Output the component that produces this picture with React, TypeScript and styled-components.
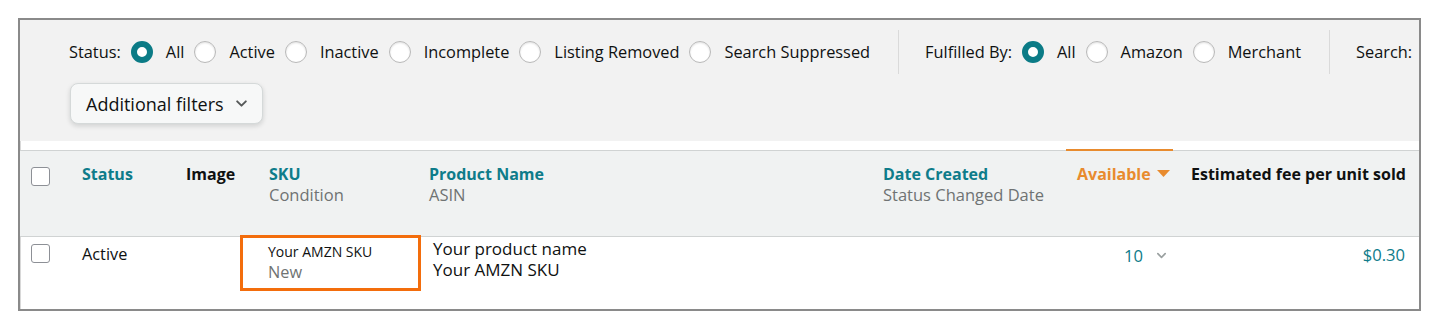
import React from "react";
import styled, { createGlobalStyle } from "styled-components";

const Global = createGlobalStyle`
  html, body { margin: 0; padding: 0; background: #fff; }
  body { font-family: "Open Sans", "Liberation Sans", sans-serif; color: #0f1111; }
  * { box-sizing: border-box; }
`;

const Page = styled.div`
  padding: 18px 19px 0 18px;
`;

const Frame = styled.div`
  border: 2px solid #8a8a8a;
  box-shadow: inset 1px 1px 0 #d8d8d8;
  width: 1403px;
  height: 293px;
  background: #fff;
  display: flex;
  flex-direction: column;
  overflow: hidden;
`;

const FilterArea = styled.div`
  background: #f2f2f2;
  padding: 10px 0 17px 49px;
  display: flex;
  flex-direction: column;
  gap: 9px;
`;

const FilterRow = styled.div`
  display: flex;
  align-items: center;
  height: 44px;
  white-space: nowrap;
  font-size: 16.35px;
  & > * { flex-shrink: 0; }
`;

const GroupLabel = styled.span`
  margin-right: 10px;
`;

const Divider = styled.div`
  width: 1px;
  flex-shrink: 0;
  align-self: stretch;
  background: #dadada;
  margin: 0 26px 0 18px;
`;

const RadioItem = styled.label`
  display: flex;
  align-items: center;
  gap: 13px;
  margin-right: 10px;
`;

const RadioCircle = styled.span<{ $on?: boolean }>`
  flex-shrink: 0;
  width: 22px;
  height: 22px;
  border-radius: 50%;
  background: #fff;
  border: ${(p) => (p.$on ? "6px solid #0b7b86" : "1.5px solid #b9b9b9")};
  box-shadow: ${(p) => (p.$on ? "none" : "inset 0 1px 2px rgba(0,0,0,0.12)")};
`;

const FilterButton = styled.button`
  align-self: flex-start;
  margin-left: 1px;
  height: 41px;
  padding: 0 14px 0 15px;
  display: flex;
  align-items: center;
  gap: 11px;
  background: #f7f8f8;
  border: 1px solid #d5d9d9;
  border-radius: 8px;
  box-shadow: 0 2px 5px rgba(15, 17, 17, 0.15);
  font-family: inherit;
  font-size: 18px;
  color: #0f1111;
`;

const Table = styled.div`
  margin-top: 9px;
  border-top: 1px solid #d0d3d3;
  flex: 1;
  display: flex;
  flex-direction: column;
`;

const cols = "62px 104px 54px 181px 462px 183px 107px 246px";

const HeadRow = styled.div`
  display: grid;
  grid-template-columns: ${cols};
  background: #f0f2f2;
  height: 86px;
  border-bottom: 1px solid #d0d3d3;
`;

const BodyRow = styled.div`
  display: grid;
  grid-template-columns: ${cols};
  flex: 1;
`;

const Cell = styled.div<{ $pl?: number; $pr?: number; $right?: boolean; $pt?: number }>`
  padding-left: ${(p) => p.$pl ?? 0}px;
  padding-right: ${(p) => p.$pr ?? 0}px;
  padding-top: ${(p) => p.$pt ?? 13}px;
  text-align: ${(p) => (p.$right ? "right" : "left")};
  position: relative;
`;

const SortedCell = styled(Cell)`
  &::before {
    content: "";
    position: absolute;
    left: 0;
    right: 0;
    top: -2px;
    height: 2px;
    background: #e88b2e;
  }
`;

const HeadTitle = styled.div<{ $tone?: "link" | "plain" | "sorted" }>`
  font-weight: 700;
  font-size: 16px;
  line-height: 20px;
  color: ${(p) => (p.$tone === "plain" ? "#0f1111" : p.$tone === "sorted" ? "#e88b2e" : "#0e7c8a")};
  white-space: nowrap;
  display: flex;
  align-items: center;
  gap: 6px;
`;

const HeadSub = styled.div`
  font-size: 16.5px;
  line-height: 22px;
  color: #6f7373;
  white-space: nowrap;
`;

const Check = styled.span`
  display: block;
  width: 19px;
  height: 19px;
  border: 1.5px solid #8d9096;
  border-radius: 3px;
  background: #fff;
`;

const BodyText = styled.div<{ $size?: number; $muted?: boolean; $link?: boolean }>`
  font-size: ${(p) => p.$size ?? 16.3}px;
  line-height: 21px;
  color: ${(p) => (p.$muted ? "#6f7373" : p.$link ? "#0e7c8a" : "#0f1111")};
  white-space: nowrap;
`;

const HighlightCell = styled(Cell)`
  border: 3px solid #f36d0c;
  margin-top: -2px;
  height: 56px;
`;

const QtyWrap = styled.div`
  display: flex;
  justify-content: flex-end;
  align-items: center;
  gap: 13px;
  font-size: 16.6px;
  color: #0e7c8a;
`;

const Chevron = ({ color = "#555", size = 12 }: { color?: string; size?: number }) => (
  <svg width={size} height={size} viewBox="0 0 12 12" fill="none">
    <path d="M2 4l4 4 4-4" stroke={color} strokeWidth="1.8" strokeLinecap="round" strokeLinejoin="round" />
  </svg>
);

const Caret = () => (
  <svg width="13" height="8" viewBox="0 0 13 8">
    <path d="M0 0h13L6.5 7z" fill="#e88b2e" />
  </svg>
);

const Radio = ({ label, on }: { label: string; on?: boolean }) => (
  <RadioItem>
    <RadioCircle $on={on} />
    <span>{label}</span>
  </RadioItem>
);

export default function App() {
  return (
    <>
      <Global />
      <Page>
        <Frame>
          <FilterArea>
            <FilterRow>
              <GroupLabel>Status:</GroupLabel>
              <Radio label="All" on />
              <Radio label="Active" />
              <Radio label="Inactive" />
              <Radio label="Incomplete" />
              <Radio label="Listing Removed" />
              <Radio label="Search Suppressed" />
              <Divider />
              <GroupLabel>Fulfilled By:</GroupLabel>
              <Radio label="All" on />
              <Radio label="Amazon" />
              <Radio label="Merchant" />
              <Divider />
              <GroupLabel>Search:</GroupLabel>
            </FilterRow>
            <FilterButton>
              Additional filters
              <Chevron color="#565959" size={13} />
            </FilterButton>
          </FilterArea>
          <Table>
            <HeadRow>
              <Cell $pl={11} $pt={16}><Check /></Cell>
              <Cell><HeadTitle>Status</HeadTitle></Cell>
              <Cell><HeadTitle $tone="plain">Image</HeadTitle></Cell>
              <Cell $pl={29}>
                <HeadTitle>SKU</HeadTitle>
                <HeadSub>Condition</HeadSub>
              </Cell>
              <Cell $pl={8}>
                <HeadTitle>Product Name</HeadTitle>
                <HeadSub>ASIN</HeadSub>
              </Cell>
              <Cell>
                <HeadTitle>Date Created</HeadTitle>
                <HeadSub>Status Changed Date</HeadSub>
              </Cell>
              <SortedCell $pl={11}>
                <HeadTitle $tone="sorted">Available <Caret /></HeadTitle>
              </SortedCell>
              <Cell $pl={18}>
                <HeadTitle $tone="plain">Estimated fee per unit sold</HeadTitle>
              </Cell>
            </HeadRow>
            <BodyRow>
              <Cell $pl={11} $pt={7}><Check /></Cell>
              <Cell $pt={7}><BodyText>Active</BodyText></Cell>
              <Cell />
              <HighlightCell $pl={25} $pt={3}>
                <BodyText $size={14}>Your AMZN SKU</BodyText>
                <BodyText $muted>New</BodyText>
              </HighlightCell>
              <Cell $pl={12} $pt={1}>
                <BodyText $size={17}>Your product name</BodyText>
                <BodyText $size={17}>Your AMZN SKU</BodyText>
              </Cell>
              <Cell />
              <Cell $pr={6} $pt={7}>
                <QtyWrap>10 <Chevron color="#9aa0a0" size={11} /></QtyWrap>
              </Cell>
              <Cell $pr={14} $pt={7} $right>
                <BodyText $link $size={16.6}>$0.30</BodyText>
              </Cell>
            </BodyRow>
          </Table>
        </Frame>
      </Page>
    </>
  );
}
